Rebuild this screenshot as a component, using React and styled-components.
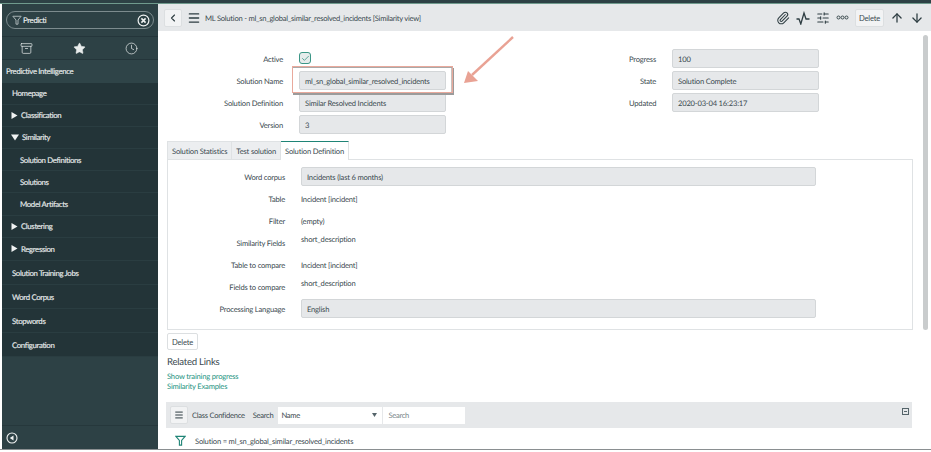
import React from "react";
import styled, { createGlobalStyle } from "styled-components";
import { ChevronLeft, Menu, Star, Clock, Archive, Paperclip, SlidersHorizontal, ArrowUp, ArrowDown, Check } from "lucide-react";

const GlobalStyle = createGlobalStyle`
  html, body { margin: 0; padding: 0; height: 100%; background: #fff; overflow: hidden; }
  body {
    font-family: "Lato", "Noto Sans", sans-serif;
    font-size: 7.6px;
    letter-spacing: -0.2px;
    color: #3b4a50;
    text-rendering: geometricPrecision;
  }
  * { box-sizing: border-box; }
`;

const Page = styled.div`
  width: 931px;
  height: 452px;
  position: relative;
  display: flex;
  flex-direction: column;
  overflow: hidden;
  background: #fff;
`;

const TopStrip = styled.div`
  height: 4px;
  flex: none;
  background: #2d4145;
  border-bottom: 1px solid #6f9a8d;
`;

const Body = styled.div`
  display: flex;
  height: 445px;
  flex: none;
  padding-left: 2px;
`;

const BottomLine = styled.div`
  height: 3px;
  flex: none;
  background: linear-gradient(#8a8f91 1px, #fff 1px);
`;

/* sidebar */
const Sidebar = styled.nav`
  width: 156px;
  flex: none;
  display: flex;
  flex-direction: column;
  background: #2d4145;
  color: #e8ecec;
  font-size: 7.8px;
  letter-spacing: -0.34px;
  -webkit-text-stroke: 0.15px #e8ecec;
`;

const FilterWrap = styled.div`
  height: 32px;
  padding: 7px 4px 0;
  flex: none;
`;

const FilterBox = styled.div`
  height: 18px;
  border: 1px solid #7c8b8e;
  border-radius: 9px;
  display: flex;
  align-items: center;
  padding: 0 3px 0 5px;
  gap: 1px;
  color: #eef1f1;
`;

const Grow = styled.span`
  flex: 1;
`;

const TabIcons = styled.div`
  height: 24px;
  flex: none;
  display: flex;
  align-items: center;
  justify-content: space-between;
  padding: 0 20px 0 18px;
  border-top: 1px solid #24353a;
  border-bottom: 1px solid #24353a;
  color: #e8ecec;
`;

const AppTitle = styled.div`
  height: 22.5px;
  flex: none;
  display: flex;
  align-items: center;
  padding-left: 4px;
  background: #2f4448;
`;

const NavItem = styled.div`
  height: ${(p) => p.$h}px;
  flex: none;
  display: flex;
  align-items: center;
  gap: 3px;
  padding-left: ${(p) => p.$indent || 10}px;
  background: #233438;
  border-bottom: 1px solid #2a3d41;
`;

const SideFill = styled.div`
  flex: 1;
`;

const SideFooter = styled.div`
  height: 24px;
  flex: none;
  display: flex;
  align-items: center;
  padding-left: 4px;
  border-top: 1px solid #26383c;
`;

/* main */
const Main = styled.main`
  flex: 1;
  display: flex;
  flex-direction: column;
  min-width: 0;
`;

const Header = styled.header`
  height: 27px;
  flex: none;
  display: flex;
  align-items: center;
  padding: 0 7px 0 6px;
  background: #e6e8ea;
  color: #2e3d42;
`;

const IconButton = styled.button`
  width: 18px;
  height: 18px;
  padding: 0;
  display: flex;
  align-items: center;
  justify-content: center;
  background: #f2f3f4;
  border: 1px solid #dcdfe1;
  border-radius: 2px;
  color: #2e3d42;
  flex: none;
`;

const HeaderTitle = styled.span`
  margin-left: 4px;
  flex: 1;
  color: #3b4a50;
  letter-spacing: -0.25px;
`;

const HeaderActions = styled.div`
  display: flex;
  align-items: center;
  gap: 6px;
  color: #2e3d42;
`;

const TextButton = styled.button`
  height: ${(p) => p.$h || 18}px;
  width: ${(p) => p.$w}px;
  padding: 0;
  font: inherit;
  letter-spacing: inherit;
  color: #3b4a50;
  background: ${(p) => p.$bg || "#f2f3f4"};
  border: 1px solid #dcdfe1;
  border-radius: 2px;
`;

const Content = styled.div`
  flex: 1;
  padding: 18px 19px 0 8px;
  width: 763px;
  min-height: 0;
`;

const TopForm = styled.div`
  display: grid;
  grid-template-columns: 463px 1fr;
`;

const FormColumn = styled.div`
  display: flex;
  flex-direction: column;
  gap: 3px;
`;

const FormRow = styled.div`
  height: 19px;
  display: grid;
  grid-template-columns: ${(p) => p.$label}px 147px;
  column-gap: 16px;
  align-items: center;
`;

const Label = styled.label`
  text-align: right;
  color: #3b4a50;
`;

const ReadOnly = styled.div`
  height: 19px;
  display: flex;
  align-items: center;
  padding-left: 5px;
  background: #e6e8ea;
  border: 1px solid #d3d6d8;
  border-radius: 2px;
  color: #3b4a50;
`;

const Checkbox = styled.div`
  width: 12px;
  height: 12px;
  margin-top: -1px;
  border: 1.5px solid #3b9686;
  border-radius: 3px;
  background: #e6ecec;
  display: flex;
  align-items: center;
  justify-content: center;
  color: #2f8f7f;
`;

const Tabs = styled.div`
  display: flex;
  margin-top: 7px;
  height: 18px;
  padding-left: 1px;
`;

const Tab = styled.div`
  display: flex;
  align-items: center;
  padding: 0 4px;
  border: 1px solid #dfe2e4;
  border-bottom: none;
  border-left: ${(p) => (p.$first ? "1px solid #dfe2e4" : "none")};
  background: ${(p) => (p.$active ? "#fff" : "#eceef0")};
  border-top: ${(p) => (p.$active ? "1.5px solid #1f8476" : "1px solid #dfe2e4")};
  margin-bottom: ${(p) => (p.$active ? "-1px" : "0")};
  position: relative;
  z-index: 1;
`;

const TabPanel = styled.section`
  width: 746px;
  margin-left: 1px;
  height: 171px;
  border: 1px solid #dfe2e4;
  padding-top: 7px;
  display: flex;
  flex-direction: column;
  gap: 3px;
`;

const PanelRow = styled.div`
  height: 19px;
  display: grid;
  grid-template-columns: 117px 515px;
  column-gap: 16px;
  align-items: center;
`;

const PlainValue = styled.div`
  color: #3b4a50;
  line-height: 12px;
  align-self: ${(p) => (p.$top ? "start" : "center")};
  margin-top: ${(p) => (p.$top ? "-0.5px" : "0")};
`;

const RelatedTitle = styled.h3`
  margin: 6px 0 2px;
  font-size: 9.6px;
  letter-spacing: -0.25px;
  font-weight: 400;
  line-height: 13px;
  color: #3b4a50;
  padding-left: 1px;
`;

const ActionsRow = styled.div`
  margin-top: 3px;
  padding-left: 1px;
`;

const ResLink = styled.a`
  display: block;
  line-height: 10px;
  color: #23937f;
  padding-left: 1px;
`;

const ListBar = styled.div`
  width: 746px;
  height: 26px;
  margin-top: 11px;
  display: flex;
  align-items: center;
  padding-left: 4px;
  background: #e6e8ea;
  position: relative;
  letter-spacing: -0.28px;
`;

const BarLabel = styled.span`
  margin-left: ${(p) => p.$ml}px;
`;

const Select = styled.div`
  width: 104px;
  height: 17px;
  margin-left: 5px;
  background: #fff;
  display: flex;
  align-items: center;
  justify-content: space-between;
  padding: 0 5px 0 3px;
`;

const SearchBox = styled.div`
  width: 82px;
  height: 17px;
  background: #fff;
  margin-left: 1px;
  display: flex;
  align-items: center;
  padding-left: 5px;
  color: #7a868a;
`;

const Collapse = styled.div`
  position: absolute;
  right: 3px;
  top: 6px;
  width: 7px;
  height: 7px;
  border: 1px solid #55646a;
  display: flex;
  align-items: center;
  justify-content: center;
  &::after {
    content: "";
    width: 3px;
    height: 1px;
    background: #55646a;
  }
`;

const Breadcrumb = styled.div`
  display: flex;
  align-items: center;
  gap: 9px;
  padding: 7px 0 0 9px;
`;

const Scrollbar = styled.div`
  position: absolute;
  left: 923px;
  top: 35px;
  width: 5px;
  height: 295px;
  background: #c9cccd;
  border-radius: 3px;
`;

/* annotation laid over the form */
const Highlight = styled.div`
  position: absolute;
  left: 292px;
  top: 66px;
  width: 161px;
  height: 27px;
  border: 1.5px solid #e9a99c;
  box-shadow: 1px 2px 0 #9b9b9b, inset 0 1px 0 #a9a9a9, inset -1px 0 0 #c9c0bd;
  pointer-events: none;
`;

const ArrowOverlay = styled.svg`
  position: absolute;
  left: 455px;
  top: 30px;
  width: 70px;
  height: 60px;
`;

const Caret = () => (
  <svg width="7" height="7" viewBox="0 0 7 7">
    <path d="M0.5 0 L6.5 3.5 L0.5 7 Z" fill="#f1f3f3" />
  </svg>
);

const CaretDown = () => (
  <svg width="8" height="7" viewBox="0 0 8 7">
    <path d="M0 0.5 L8 0.5 L4 6.5 Z" fill="#f1f3f3" />
  </svg>
);

const FunnelIcon = ({ color = "#a9b4b6", size = 10 }) => (
  <svg width={size} height={size} viewBox="0 0 12 12" fill="none" stroke={color} strokeWidth="1.2">
    <path d="M1 1.5 H11 L7.2 6 V11 H4.8 V6 Z" />
  </svg>
);

const ClearIcon = () => (
  <svg width="13" height="13" viewBox="0 0 13 13" fill="none" stroke="#f1f3f3">
    <circle cx="6.5" cy="6.5" r="5.4" strokeWidth="1.2" />
    <path d="M4.4 4.4 L8.6 8.6 M8.6 4.4 L4.4 8.6" strokeWidth="1.5" />
  </svg>
);

const PulseIcon = () => (
  <svg width="14" height="14" viewBox="0 0 14 14" fill="none" stroke="#2e3d42" strokeWidth="1.3">
    <path d="M0.5 8 L3 8 L4.8 13 L8 2 L10 8 L13.5 8" />
  </svg>
);

const DotsIcon = () => (
  <svg width="13" height="5" viewBox="0 0 13 5" fill="none" stroke="#2e3d42" strokeWidth="0.9">
    <circle cx="2.5" cy="2.5" r="1.5" />
    <circle cx="6.5" cy="2.5" r="1.5" />
    <circle cx="10.5" cy="2.5" r="1.5" />
  </svg>
);

const BackCircle = () => (
  <svg width="12" height="12" viewBox="0 0 12 12" fill="none">
    <circle cx="6" cy="6" r="5" stroke="#f1f3f3" strokeWidth="1.1" />
    <path d="M7.5 3.5 V8.5 L3.8 6 Z" fill="#f1f3f3" />
  </svg>
);

const navTop = [
  { label: "Homepage", h: 22.2 },
  { label: "Classification", caret: "right", h: 22.2 },
  { label: "Similarity", caret: "down", h: 22.2 },
  { label: "Solution Definitions", indent: 18, h: 22.2 },
  { label: "Solutions", indent: 18, h: 22.2 },
  { label: "Model Artifacts", indent: 18, h: 22.2 },
  { label: "Clustering", caret: "right", h: 22.2 },
  { label: "Regression", caret: "right", h: 23.2 },
];

const navBottom = ["Solution Training Jobs", "Word Corpus", "Stopwords", "Configuration"];

const App = () => {
  return (
    <>
      <GlobalStyle />
      <Page>
        <TopStrip />
        <Body>
          <Sidebar>
            <FilterWrap>
              <FilterBox>
                <FunnelIcon />
                <Grow>Predicti</Grow>
                <ClearIcon />
              </FilterBox>
            </FilterWrap>
            <TabIcons>
              <Archive size={13} strokeWidth={1.3} />
              <Star size={13} fill="#e8ecec" strokeWidth={1} />
              <Clock size={13} strokeWidth={1.3} />
            </TabIcons>
            <AppTitle>Predictive Intelligence</AppTitle>
            {navTop.map((item) => (
              <NavItem key={item.label} $indent={item.caret ? 9 : item.indent || 10} $h={item.h}>
                {item.caret === "right" && <Caret />}
                {item.caret === "down" && <CaretDown />}
                {item.label}
              </NavItem>
            ))}
            {navBottom.map((label) => (
              <NavItem key={label} $h={24}>{label}</NavItem>
            ))}
            <SideFill />
            <SideFooter>
              <BackCircle />
            </SideFooter>
          </Sidebar>
          <Main>
            <Header>
              <IconButton>
                <ChevronLeft size={12} strokeWidth={2.2} />
              </IconButton>
              <Menu size={14} strokeWidth={2.2} style={{ marginLeft: 5 }} />
              <HeaderTitle>ML Solution - ml_sn_global_similar_resolved_incidents [Similarity view]</HeaderTitle>
              <HeaderActions>
                <Paperclip size={14} strokeWidth={1.8} />
                <PulseIcon />
                <SlidersHorizontal size={14} strokeWidth={1.8} />
                <DotsIcon />
                <TextButton $w={29}>Delete</TextButton>
                <ArrowUp size={14} strokeWidth={2.2} />
                <ArrowDown size={14} strokeWidth={2.2} />
              </HeaderActions>
            </Header>
            <Content>
              <TopForm>
                <FormColumn>
                  <FormRow $label={117}>
                    <Label>Active</Label>
                    <Checkbox>
                      <Check size={9} strokeWidth={2} />
                    </Checkbox>
                  </FormRow>
                  <FormRow $label={117}>
                    <Label>Solution Name</Label>
                    <ReadOnly>ml_sn_global_similar_resolved_incidents</ReadOnly>
                  </FormRow>
                  <FormRow $label={117}>
                    <Label>Solution Definition</Label>
                    <ReadOnly>Similar Resolved Incidents</ReadOnly>
                  </FormRow>
                  <FormRow $label={117}>
                    <Label>Version</Label>
                    <ReadOnly>3</ReadOnly>
                  </FormRow>
                </FormColumn>
                <FormColumn>
                  <FormRow $label={27}>
                    <Label>Progress</Label>
                    <ReadOnly>100</ReadOnly>
                  </FormRow>
                  <FormRow $label={27}>
                    <Label>State</Label>
                    <ReadOnly>Solution Complete</ReadOnly>
                  </FormRow>
                  <FormRow $label={27}>
                    <Label>Updated</Label>
                    <ReadOnly>2020-03-04 16:23:17</ReadOnly>
                  </FormRow>
                </FormColumn>
              </TopForm>
              <Tabs>
                <Tab $first>Solution Statistics</Tab>
                <Tab>Test solution</Tab>
                <Tab $active>Solution Definition</Tab>
              </Tabs>
              <TabPanel>
                <PanelRow>
                  <Label>Word corpus</Label>
                  <ReadOnly>Incidents (last 6 months)</ReadOnly>
                </PanelRow>
                <PanelRow>
                  <Label>Table</Label>
                  <PlainValue>Incident [incident]</PlainValue>
                </PanelRow>
                <PanelRow>
                  <Label>Filter</Label>
                  <PlainValue>(empty)</PlainValue>
                </PanelRow>
                <PanelRow>
                  <Label>Similarity Fields</Label>
                  <PlainValue $top>short_description</PlainValue>
                </PanelRow>
                <PanelRow>
                  <Label>Table to compare</Label>
                  <PlainValue>Incident [incident]</PlainValue>
                </PanelRow>
                <PanelRow>
                  <Label>Fields to compare</Label>
                  <PlainValue $top>short_description</PlainValue>
                </PanelRow>
                <PanelRow>
                  <Label>Processing Language</Label>
                  <ReadOnly>English</ReadOnly>
                </PanelRow>
              </TabPanel>
              <ActionsRow>
                <TextButton $bg="#fff" $w={31} $h={17}>Delete</TextButton>
              </ActionsRow>
              <RelatedTitle>Related Links</RelatedTitle>
              <ResLink>Show training progress</ResLink>
              <ResLink>Similarity Examples</ResLink>
              <ListBar>
                <IconButton>
                  <Menu size={10} strokeWidth={2.4} />
                </IconButton>
                <BarLabel $ml={4}>Class Confidence</BarLabel>
                <BarLabel $ml={8}>Search</BarLabel>
                <Select>
                  Name
                  <svg width="5" height="4" viewBox="0 0 5 4">
                    <path d="M0 0 H5 L2.5 4 Z" fill="#55646a" />
                  </svg>
                </Select>
                <SearchBox>Search</SearchBox>
                <Collapse />
              </ListBar>
              <Breadcrumb>
                <FunnelIcon color="#1f8476" size={11} />
                <span>Solution = ml_sn_global_similar_resolved_incidents</span>
              </Breadcrumb>
            </Content>
          </Main>
        </Body>
        <BottomLine />
        <Scrollbar />
        <Highlight />
        <ArrowOverlay viewBox="0 0 70 60">
          <path d="M58 7 L17 45" stroke="#e9a294" strokeWidth="2.4" fill="none" />
          <path d="M9 53 L13 41 L23 51 Z" fill="#e9a294" />
        </ArrowOverlay>
      </Page>
    </>
  );
};

export default App;
